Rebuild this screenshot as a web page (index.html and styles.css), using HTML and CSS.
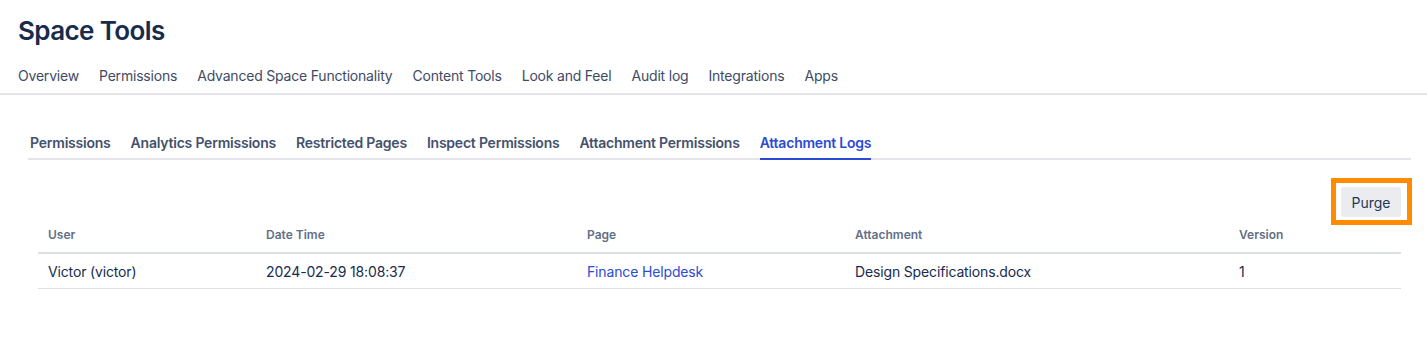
FILE: index.html
```html
<!DOCTYPE html>
<html lang="en">
<head>
  <meta charset="UTF-8" />
  <meta name="viewport" content="width=device-width, initial-scale=1.0" />
  <title>Space Tools</title>
  <link rel="stylesheet" href="styles.css">
</head>
<body>

<!-- Page header -->
<header class="page-header">
  <h1>Space Tools</h1>
  <nav class="main-nav">
    <a href="#">Overview</a>
    <a href="#">Permissions</a>
    <a href="#">Advanced Space Functionality</a>
    <a href="#">Content Tools</a>
    <a href="#">Look and Feel</a>
    <a href="#">Audit log</a>
    <a href="#">Integrations</a>
    <a href="#">Apps</a>
  </nav>
</header>

<main class="content">
  <div class="tabs">
    <a href="#" class="tab">Permissions</a>
    <a href="#" class="tab">Analytics Permissions</a>
    <a href="#" class="tab">Restricted Pages</a>
    <a href="#" class="tab">Inspect Permissions</a>
    <a href="#" class="tab">Attachment Permissions</a>
    <a href="#" class="tab active">Attachment Logs</a>
  </div>

  <div class="log-panel">
    <div class="toolbar">
      <button class="purge">Purge</button>
    </div>

    <table class="logs">
      <thead>
        <tr>
          <th class="col-user">User</th>
          <th class="col-date">Date Time</th>
          <th class="col-page">Page</th>
          <th class="col-file">Attachment</th>
          <th class="col-version">Version</th>
        </tr>
      </thead>
      <tbody>
        <tr>
          <td>Victor (victor)</td>
          <td>2024-02-29 18:08:37</td>
          <td><a href="#">Finance Helpdesk</a></td>
          <td>Design Specifications.docx</td>
          <td>1</td>
        </tr>
      </tbody>
    </table>
  </div>
</main>

</body>
</html>
```

FILE: styles.css
```css
body {
  font-family: Inter, "Noto Sans", sans-serif;
  color: #172b4d;
  background: #fff;
  margin: 0;
}

/* header + main navigation */
.page-header {
  padding: 0 18px;
  border-bottom: 2px solid #e4e5ea;
}

.page-header h1 {
  margin: 0;
  padding-top: 14px;
  font-size: 26px;
  line-height: 34px;
  font-weight: 600;
  letter-spacing: -0.6px;
  color: #172b4d;
}

.main-nav {
  display: flex;
  gap: 20px;
  padding: 18px 0 7px;
}

.main-nav a {
  color: #3e4b66;
  text-decoration: none;
  font-size: 14px;
  line-height: 20px;
  letter-spacing: -0.2px;
}

/* content */
.content {
  padding: 38px 16px 0 28px;
}

.tabs {
  display: flex;
  gap: 20px;
  padding-left: 2px;
  border-bottom: 2px solid #e4e5ea;
}

.tab {
  color: #44516c;
  text-decoration: none;
  font-size: 14px;
  font-weight: 600;
  line-height: 20px;
  letter-spacing: -0.22px;
  padding-bottom: 5px;
  border-bottom: 2px solid transparent;
  margin-bottom: -2px;
}

.tab.active {
  color: #2b4bd4;
  border-bottom-color: #2b4bd4;
}

.log-panel {
  padding: 27px 10px 0;
}

.toolbar {
  display: flex;
  justify-content: flex-end;
}

.purge {
  position: relative;
  font-family: inherit;
  font-size: 14px;
  color: #253858;
  background: #ebecf0;
  border: none;
  border-radius: 3px;
  width: 60px;
  height: 30px;
  padding: 0;
}

/* highlight frame drawn over the button */
.purge::after {
  content: "";
  position: absolute;
  top: -9px;
  bottom: -8px;
  left: -10px;
  right: -11px;
  border: 5px solid #ff8b00;
}

.logs {
  width: 100%;
  border-collapse: collapse;
  table-layout: fixed;
}

.logs th {
  text-align: left;
  font-size: 12px;
  font-weight: 600;
  line-height: 16px;
  color: #626f86;
  padding: 10px 10px 9px;
  border-bottom: 2px solid #dcdfe4;
}

.logs td {
  font-size: 14px;
  line-height: 20px;
  letter-spacing: -0.15px;
  padding: 8px 10px 6px;
  border-bottom: 1px solid #dcdfe4;
}

.logs td a {
  color: #2b4bd4;
  text-decoration: none;
}

.col-user { width: 198px; }
.col-date { width: 301px; }
.col-page { width: 248px; }
.col-file { width: 364px; }
```
